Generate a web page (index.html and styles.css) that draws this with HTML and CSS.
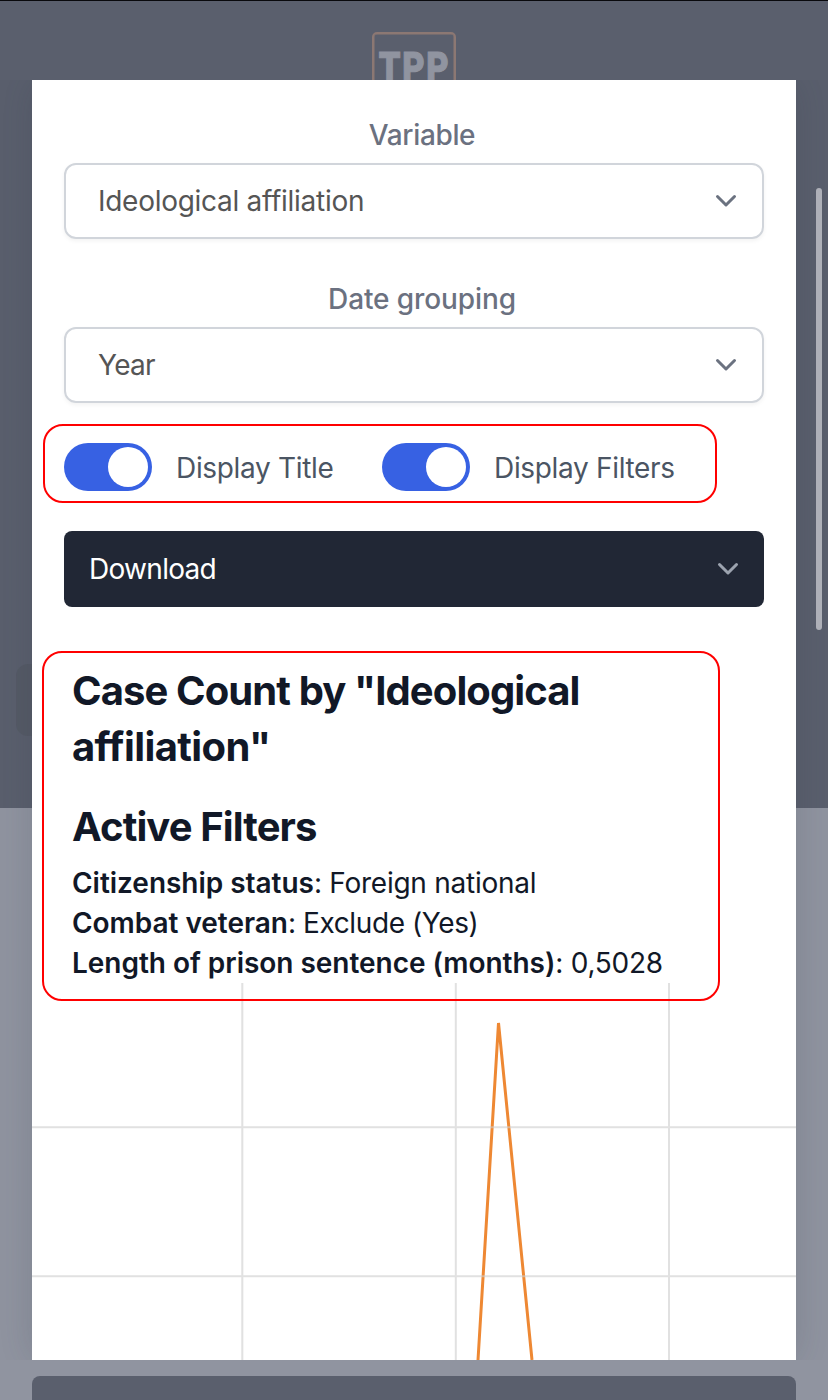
FILE: index.html
```
<!DOCTYPE html>
<html lang="en">
<head>
<meta charset="utf-8">
<title>Case Count</title>
<link rel="stylesheet" href="styles.css">
</head>
<body>
<div class="page">
  <header class="hero"><div class="logo"><span class="logo-text">TPP</span></div><div class="hero-pill"></div></header>
  <div class="page-card"></div>
</div>
<div class="overlay">
  <main class="modal">
    <label class="label"><span class="t-variable">Variable</span></label>
    <div class="select"><span class="t-ideo">Ideological affiliation</span><svg class="chevron" viewBox="0 0 24 16"><path d="M3.500 3.500 12 12 20.500 3.500"/></svg></div>
    <label class="label label-date"><span class="t-date">Date grouping</span></label>
    <div class="select"><span class="t-year">Year</span><svg class="chevron" viewBox="0 0 24 16"><path d="M3.500 3.500 12 12 20.500 3.500"/></svg></div>
    <div class="toggles">
      <div class="switch"><i class="knob"></i></div><span class="switch-label first">Display Title</span>
      <div class="switch"><i class="knob"></i></div><span class="switch-label">Display Filters</span>
      <div class="mark mark-toggles"></div>
    </div>
    <div class="download"><span class="t-down">Download</span><svg class="chevron" viewBox="0 0 24 16"><path d="M3.500 3.500 12 12 20.500 3.500"/></svg></div>
    <section class="summary">
      <h2 class="heading">Case Count by "Ideological<br><span class="t-h2">affiliation"</span></h2>
      <h2 class="heading heading-filters">Active Filters</h2>
      <p class="filter"><b>Citizenship status</b>: Foreign national</p>
      <p class="filter filter-veteran"><b>Combat veteran</b>: Exclude (Yes)</p>
      <p class="filter"><b>Length of prison sentence (months)</b>: 0,5028</p>
      <div class="mark mark-summary"></div>
    </section>
    <svg class="chart" viewBox="0 0 764 377">
      <path class="series" d="M446 377 466.500 40 500 377"/>
      <path class="grid" d="M210.300 0V377M423.800 0V377M637 0V377M0 144.300H764M0 293.300H764"/>
    </svg>
  </main>
  <div class="scrollbar"></div>
</div>
</body>
</html>
```
FILE: styles.css
```
* { box-sizing: border-box; }
body { margin: 0; height: 1400px; overflow: hidden; position: relative; background: #9094a0; font-family: Inter, "Liberation Sans", sans-serif; font-size: 28px; }
.page { height: 1400px; display: flex; flex-direction: column; }
.hero { height: 808px; flex: none; background: #5a5f6d; border-top: 1px solid #09090d; padding-top: 31px; position: relative; }
.logo { width: 84px; height: 80px; margin-left: 372px; border: 2px solid #8c7873; box-shadow: inset 0 0 0 .5px #8c7873; border-radius: 5px; padding-top: 14px; display: flex; justify-content: center; overflow: hidden; }
.logo-text { font: 900 42px/40px Roboto, sans-serif; color: #9094a0; letter-spacing: 2px; margin-right: -2px; -webkit-text-stroke: 1px #9094a0; transform: scaleX(.82); }
.hero-pill { position: absolute; left: 16px; top: 663px; width: 60px; height: 72px; border-radius: 12px; background: #555a66; }
.page-card { margin: 568px 32px 0; height: 24px; border-radius: 8px 8px 0 0; background: #5a5f6d; }
.overlay { position: absolute; left: 0; top: 80px; width: 828px; height: 1280px; overflow: hidden; padding: 0 32px; }
.modal { height: 1280px; background: #fff; padding: 35px 32px 0; display: flex; flex-direction: column; box-shadow: 0 0 36px rgba(40,50,65,.18); }
.label { height: 48px; line-height: 41px; padding-left: 16px; text-align: center; font-weight: 500; color: #6b7180; flex: none; }
.label-date { margin-top: 40px; }
.t-variable { letter-spacing: -.35px; }
.t-date { letter-spacing: -.1px; }
.t-ideo { letter-spacing: -.28px; }
.t-year { letter-spacing: -.7px; }
.t-down { letter-spacing: -.7px; }
.select { height: 76px; flex: none; border: 2px solid #d1d5db; border-radius: 12px; padding: 0 24px 0 32px; display: flex; align-items: center; justify-content: space-between; color: #555; box-shadow: 0 2px 4px rgba(0,0,0,.05); }
.chevron { width: 24px; height: 16px; fill: none; stroke: #6b7280; stroke-width: 3; stroke-linecap: round; stroke-linejoin: round; }
.toggles { margin-top: 40px; height: 48px; flex: none; display: flex; align-items: center; position: relative; color: #4b5563; }
.switch { width: 88px; height: 48px; border-radius: 24px; background: #3761e3; padding: 4px; display: flex; justify-content: flex-end; }
.knob { width: 40px; height: 40px; border-radius: 50%; background: #fff; }
.switch-label { padding: 1px 0 0 24px; letter-spacing: -.33px; }
.first { width: 230px; }
.mark { position: absolute; border: 2px solid #f00; border-radius: 20px; }
.mark-toggles { left: -21px; top: -19px; width: 674px; height: 79px; }
.download { margin-top: 40px; height: 76px; flex: none; border-radius: 8px; background: #212735; color: #fff; padding: 0 24px 0 25px; display: flex; align-items: center; justify-content: space-between; }
.download .chevron { stroke: #9ca3af; }
.summary { margin-top: 56px; height: 320px; flex: none; padding-left: 8px; position: relative; color: #111827; }
.heading { margin: 0; font-size: 40px; line-height: 56px; font-weight: 700; letter-spacing: -.9px; }
.t-h2 { letter-spacing: -.6px; }
.heading-filters { margin-top: 24px; margin-bottom: 8px; }
.filter { margin: 0; line-height: 41px; height: 40px; letter-spacing: -.26px; }
.filter-veteran { letter-spacing: -.4px; }
.filter b { font-weight: 600; letter-spacing: -.03px; }
.mark-summary { left: -22px; top: -12px; width: 678px; height: 350px; }
.chart { width: 764px; height: 377px; margin-left: -32px; flex: none; }
.grid { fill: none; stroke: rgba(205,205,205,.6); stroke-width: 2; }
.series { fill: none; stroke: #ee8833; stroke-width: 3; stroke-linejoin: bevel; }
.scrollbar { position: absolute; left: 816px; top: 108px; width: 6px; height: 442px; border-radius: 3px; background: #aeb0b8; }
```
